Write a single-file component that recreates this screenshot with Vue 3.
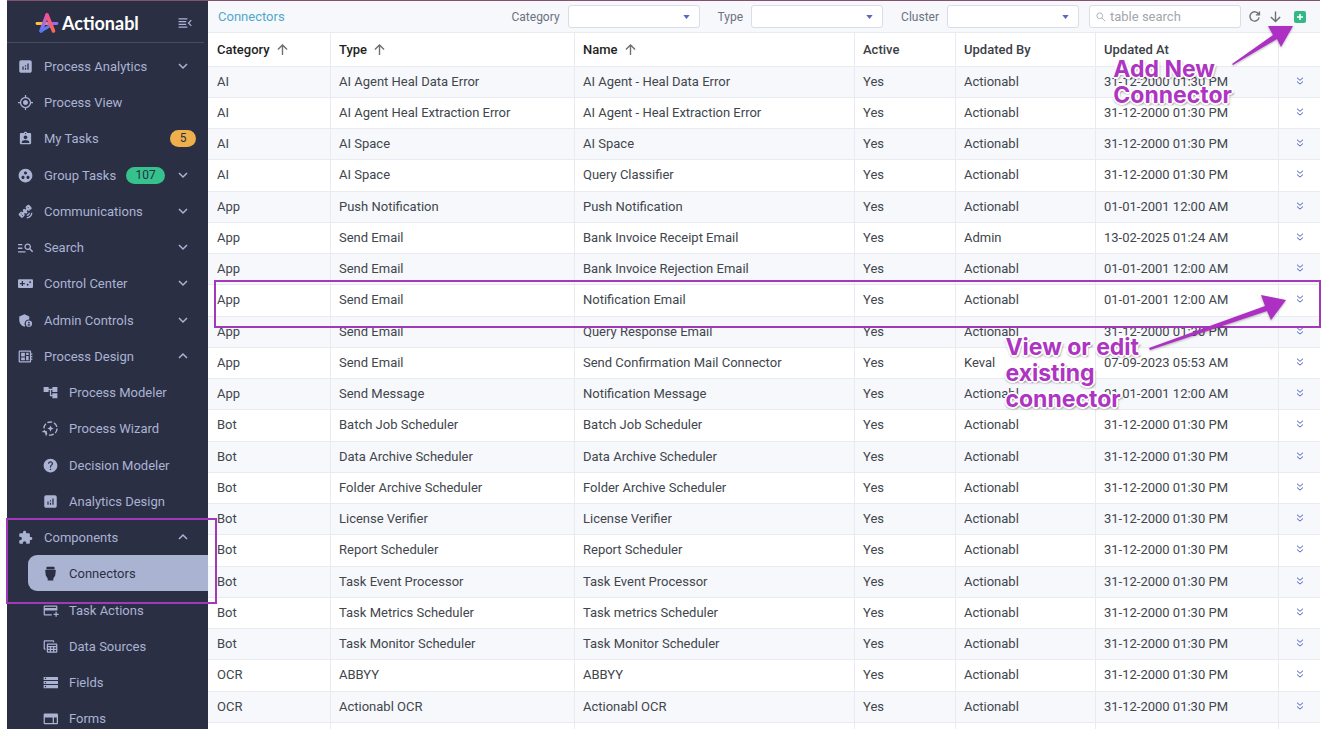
<script setup>
import { ref } from 'vue'

const icons = {
  analytics: 'M19 2H5c-1.700 0-3 1.300-3 3v14c0 1.700 1.300 3 3 3h14c1.700 0 3-1.300 3-3V5c0-1.700-1.300-3-3-3zM9 17H7v-5h2v5zm4 0h-2v-3h2v3zm0-5h-2v-2h2v2zm4 5h-2V7h2v10z',
  target: 'M12 8c-2.21 0-4 1.79-4 4s1.79 4 4 4 4-1.79 4-4-1.79-4-4-4zm8.94 3c-.46-4.17-3.77-7.48-7.94-7.94V0h-2v3.06C6.83 3.52 3.52 6.83 3.06 11H0v2h3.06c.46 4.17 3.77 7.48 7.94 7.94V24h2v-3.06c4.17-.46 7.48-3.77 7.94-7.94H24v-2h-3.06zM12 19c-3.87 0-7-3.13-7-7s3.13-7 7-7 7 3.13 7 7-3.13 7-7 7z',
  person: 'M19 3h-4.18C14.4 1.84 13.3 1 12 1c-1.3 0-2.4.84-2.82 2H5c-1.1 0-2 .9-2 2v14c0 1.1.9 2 2 2h14c1.1 0 2-.9 2-2V5c0-1.1-.9-2-2-2zm-7 0c.55 0 1 .45 1 1s-.45 1-1 1-1-.45-1-1 .45-1 1-1zm0 4c1.66 0 3 1.34 3 3s-1.34 3-3 3-3-1.34-3-3 1.34-3 3-3zm6 12H6v-1.4c0-2 4-3.1 6-3.1s6 1.1 6 3.1V19z',
  group: 'M12 1C5.900 1 1 5.900 1 12s4.900 11 11 11 11-4.900 11-11S18.100 1 12 1zM8 17.500c-1.380 0-2.500-1.120-2.500-2.500s1.120-2.500 2.500-2.500 2.500 1.120 2.500 2.500-1.120 2.500-2.500 2.500zM9.500 8c0-1.380 1.120-2.500 2.500-2.500s2.500 1.120 2.500 2.500-1.120 2.500-2.500 2.500S9.500 9.380 9.500 8zm6.500 9.500c-1.380 0-2.500-1.120-2.500-2.500s1.120-2.500 2.500-2.500 2.500 1.120 2.500 2.500-1.120 2.500-2.500 2.500z',
  satellite: 'M15.200 1.700a2 2 0 0 1 2.800 0l3.300 3.300a2 2 0 0 1 0 2.800l-2.500 2.500a2 2 0 0 1-2.800 0l-.6-.6-1.500 1.500.6.600a2 2 0 0 1 0 2.800l-.2.200a2 2 0 0 1-2.800 0l-.6-.6-1.300 1.300.6.600a2 2 0 0 1 0 2.800l-2.500 2.500a2 2 0 0 1-2.800 0L1.600 18a2 2 0 0 1 0-2.800l2.500-2.500a2 2 0 0 1 2.800 0l.6.600L8.800 12l-.6-.6a2 2 0 0 1 0-2.800l.2-.2a2 2 0 0 1 2.800 0l.6.600 1.500-1.500-.6-.6a2 2 0 0 1 0-2.800zM15.200 5.600l1 1 1-1-1-1zM17 9l1 1 .8-.8-1-1zM4 15.800l1 1 1-1-1-1zM6 18l1 1 1-1-1-1zM23 14h-2c0 3.900-3.100 7-7 7v2c5 0 9-4 9-9zM19 14h-2c0 1.700-1.300 3-3 3v2c2.800 0 5-2.200 5-5z',
  search: 'M7 8.500H0v-2h7v2zm0 3.500H0v2.200h7V12zm15.600 7.500-4.340-4.330c-.8.520-1.740.830-2.760.830-3 0-5.300-2.300-5.300-5.300s2.300-5.300 5.300-5.300 5.300 2.300 5.300 5.300c0 1.020-.310 1.960-.830 2.750L24.300 18zM18.700 10.700c0-1.800-1.400-3.200-3.200-3.200s-3.200 1.400-3.200 3.200 1.400 3.200 3.200 3.200 3.200-1.400 3.200-3.200zM0 20h12v-2.200H0V20z',
  gamepad: 'M22 5H2C.9 5 0 5.900 0 7v10c0 1.100.9 2 2 2h20c1.100 0 2-.9 2-2V7c0-1.100-.9-2-2-2zm-11 8H8v3H6v-3H3v-2h3V8h2v3h3v2zm4.500 2.500c-.83 0-1.500-.67-1.500-1.500s.67-1.500 1.500-1.500 1.500.67 1.500 1.500-.67 1.500-1.500 1.500zm4-4c-.83 0-1.500-.67-1.500-1.500s.67-1.500 1.500-1.500 1.500.67 1.500 1.500-.67 1.500-1.500 1.500z',
  shield: 'M18 10.500V5.500L10.500 2 2 5.500v5.700c0 4.800 3.400 9.300 8 10.500.6-.1 1.100-.3 1.700-.6a6.800 6.800 0 0 1 6.300-10.600zM17.500 12a5 5 0 1 0 0 10 5 5 0 0 0 0-10zm0 2.100a1.400 1.400 0 1 1 0 2.800 1.400 1.400 0 0 1 0-2.800zm0 6.400c-1.100 0-2-.5-2.600-1.300.1-.9 1.700-1.300 2.600-1.300s2.500.4 2.600 1.300c-.6.8-1.500 1.300-2.600 1.300z',
  board: 'M23 9V7h-2V4.500c0-1.100-.9-2-2-2H3c-1.100 0-2 .9-2 2v15c0 1.100.9 2 2 2h16c1.100 0 2-.9 2-2V17h2v-2h-2v-2h2v-2h-2V9zm-4 10.500H3v-15h16zM5 13.500h6V18H5zm8-7.500h4v3.500h-4zM5 6h6v6H5zm8 5h4v7h-4z',
  tree: 'M23 11V3h-8v3H9V3H1v8h8V8h2v10h4v3h8v-8h-8v3h-2V8h2v3z',
  help: 'M12 1C5.900 1 1 5.900 1 12s4.900 11 11 11 11-4.900 11-11S18.100 1 12 1zM13 19h-2v-2h2v2zm2.070-7.750l-.9.920C13.450 12.900 13 13.500 13 15h-2v-.5c0-1.100.45-2.100 1.170-2.830l1.240-1.260c.37-.36.59-.86.59-1.410 0-1.100-.9-2-2-2s-2 .9-2 2H8c0-2.210 1.790-4 4-4s4 1.790 4 4c0 .88-.36 1.680-.93 2.250z',
  wizard: 'M12 7l1.500 3.500L17 12l-3.500 1.500L12 17l-1.500-3.500L7 12l3.500-1.500z',
  puzzle: 'M20.500 11H19V7c0-1.100-.9-2-2-2h-4V3.500C13 2.120 11.880 1 10.500 1S8 2.120 8 3.500V5H4c-1.100 0-1.990.9-1.990 2v3.800H3.500c1.490 0 2.700 1.210 2.700 2.700s-1.210 2.700-2.700 2.700H2V20c0 1.100.9 2 2 2h3.800v-1.500c0-1.490 1.210-2.700 2.700-2.700 1.490 0 2.700 1.210 2.700 2.700V22H17c1.100 0 2-.9 2-2v-4h1.500c1.380 0 2.500-1.120 2.500-2.500S21.880 11 20.500 11z',
  plug: 'M7 1h10c.8 0 1.500.6 1.500 1.500V5h-13V2.500C5.500 1.600 6.200 1 7 1zM4.500 6h15c.6 0 1 .4 1 1l-1 8-3 5v3h-9v-3l-3-5-1-8c0-.6.4-1 1-1z',
  card: 'M21 4H3c-1.110 0-1.990.89-1.990 2L1 18c0 1.110.89 2 2 2h11v-2H3v-6h20V6c0-1.110-.89-2-2-2zm0 4H3V6h18v2zm4 9v2h-3v3h-2v-3h-3v-2h3v-3h2v3h3z',
  tables: 'M4 2h12c1.100 0 2 .9 2 2v1h-2V4H3v11h1v2H3c-1.100 0-2-.9-2-2V4c0-1.100.9-2 2-2zM8 7h13c1.100 0 2 .9 2 2v11c0 1.100-.9 2-2 2H8c-1.100 0-2-.9-2-2V9c0-1.100.9-2 2-2zm0 2v2h13V9zm0 4v2.500h3V13zm5 0v2.500h3V13zm5 0v2.500h3V13zM8 17.500V20h3v-2.500zm5 0V20h3v-2.500zm5 0V20h3v-2.500z',
  storage: 'M1 21h23v-5H1v5zm2-3.500h2v2H3v-2zM1 3v5h23V3H1zm4 3.500H3v-2h2v2zM1 14.500h23v-5H1v5zM3 11h2v2H3v-2z',
  web: 'M22 4H3c-1.100 0-2 .9-2 2v13c0 1.100.9 2 2 2h19c1.100 0 2-.9 2-2V6c0-1.100-.9-2-2-2zM15.500 19H3v-8.500h12.500V19zm6.500 0h-4.500v-8.500H22V19z',
}

const nav = ref([
  { label: 'Process Analytics', icon: 'analytics', arrow: 'down' },
  { label: 'Process View', icon: 'target' },
  { label: 'My Tasks', icon: 'person', badge: '5', tone: 'amber' },
  { label: 'Group Tasks', icon: 'group', badge: '107', tone: 'green', arrow: 'down' },
  { label: 'Communications', icon: 'satellite', arrow: 'down' },
  { label: 'Search', icon: 'search', arrow: 'down' },
  { label: 'Control Center', icon: 'gamepad', arrow: 'down' },
  { label: 'Admin Controls', icon: 'shield', arrow: 'down' },
  { label: 'Process Design', icon: 'board', arrow: 'up' },
  { label: 'Process Modeler', icon: 'tree', sub: true },
  { label: 'Process Wizard', icon: 'wizard', sub: true },
  { label: 'Decision Modeler', icon: 'help', sub: true },
  { label: 'Analytics Design', icon: 'analytics', sub: true },
  { label: 'Components', icon: 'puzzle', arrow: 'up' },
  { label: 'Connectors', icon: 'plug', sub: true, active: true },
  { label: 'Task Actions', icon: 'card', sub: true },
  { label: 'Data Sources', icon: 'tables', sub: true },
  { label: 'Fields', icon: 'storage', sub: true },
  { label: 'Forms', icon: 'web', sub: true },
])

const filters = ['Category', 'Type', 'Cluster']

const columns = [
  { label: 'Category', key: 'category', sort: true },
  { label: 'Type', key: 'type', sort: true },
  { label: 'Name', key: 'name', sort: true },
  { label: 'Active', key: 'active' },
  { label: 'Updated By', key: 'by' },
  { label: 'Updated At', key: 'at' },
]

const Y2000 = '31-12-2000 01:30 PM'
const Y2001 = '01-01-2001 12:00 AM'
const rows = [
  ['AI', 'AI Agent Heal Data Error', 'AI Agent - Heal Data Error', 'Actionabl', Y2000],
  ['AI', 'AI Agent Heal Extraction Error', 'AI Agent - Heal Extraction Error', 'Actionabl', Y2000],
  ['AI', 'AI Space', 'AI Space', 'Actionabl', Y2000],
  ['AI', 'AI Space', 'Query Classifier', 'Actionabl', Y2000],
  ['App', 'Push Notification', 'Push Notification', 'Actionabl', Y2001],
  ['App', 'Send Email', 'Bank Invoice Receipt Email', 'Admin', '13-02-2025 01:24 AM'],
  ['App', 'Send Email', 'Bank Invoice Rejection Email', 'Actionabl', Y2001],
  ['App', 'Send Email', 'Notification Email', 'Actionabl', Y2001],
  ['App', 'Send Email', 'Query Response Email', 'Actionabl', Y2000],
  ['App', 'Send Email', 'Send Confirmation Mail Connector', 'Keval', '07-09-2023 05:53 AM'],
  ['App', 'Send Message', 'Notification Message', 'Actionabl', Y2001],
  ['Bot', 'Batch Job Scheduler', 'Batch Job Scheduler', 'Actionabl', Y2000],
  ['Bot', 'Data Archive Scheduler', 'Data Archive Scheduler', 'Actionabl', Y2000],
  ['Bot', 'Folder Archive Scheduler', 'Folder Archive Scheduler', 'Actionabl', Y2000],
  ['Bot', 'License Verifier', 'License Verifier', 'Actionabl', Y2000],
  ['Bot', 'Report Scheduler', 'Report Scheduler', 'Actionabl', Y2000],
  ['Bot', 'Task Event Processor', 'Task Event Processor', 'Actionabl', Y2000],
  ['Bot', 'Task Metrics Scheduler', 'Task metrics Scheduler', 'Actionabl', Y2000],
  ['Bot', 'Task Monitor Scheduler', 'Task Monitor Scheduler', 'Actionabl', Y2000],
  ['OCR', 'ABBYY', 'ABBYY', 'Actionabl', Y2000],
  ['OCR', 'Actionabl OCR', 'Actionabl OCR', 'Actionabl', Y2000],
].map(([category, type, name, by, at]) => ({ category, type, name, active: 'Yes', by, at }))
</script>

<template>
  <div class="app">
    <aside class="sidebar">
      <header class="brand">
        <svg class="logo" viewBox="0 0 24 22" aria-hidden="true">
          <defs>
            <linearGradient id="lg-a" gradientUnits="userSpaceOnUse" x1="5" y1="20" x2="12" y2="3">
              <stop offset="0" stop-color="#3f7df0" /><stop offset=".5" stop-color="#a86be0" /><stop offset="1" stop-color="#f0509a" />
            </linearGradient>
            <linearGradient id="lg-b" gradientUnits="userSpaceOnUse" x1="12" y1="3" x2="18" y2="20">
              <stop offset="0" stop-color="#f0509a" /><stop offset="1" stop-color="#ff6a4a" />
            </linearGradient>
            <linearGradient id="lg-c" gradientUnits="userSpaceOnUse" x1="2" y1="0" x2="22" y2="0">
              <stop offset="0" stop-color="#ffc83a" /><stop offset=".4" stop-color="#ffa04a" /><stop offset=".6" stop-color="#c060e0" /><stop offset="1" stop-color="#8c6cf0" />
            </linearGradient>
          </defs>
          <g fill="none" stroke-width="3.600" stroke-linecap="round" stroke-linejoin="round">
            <path d="M2 11.500H22" stroke="url(#lg-c)" stroke-width="2.800" />
            <path d="M6 19L17 12.500" stroke="#5b7df2" stroke-width="3" />
            <path d="M6 19L12 3" stroke="url(#lg-a)" />
            <path d="M12 3L18.500 19" stroke="url(#lg-b)" />
          </g>
        </svg>
        <span class="brand-name">Actionabl</span>
        <button class="icon-btn collapse" type="button" aria-label="Collapse menu">
          <svg viewBox="0 0 24 24"><path d="M1 20h15v-2H1zM1 4v2h15V4zm0 6.700h13v-2H1zm0 4.700h13v-2H1zM23.500 16.100L19.500 12l4-4.100L22 6.400 16.500 12l5.500 5.600z" /></svg>
        </button>
      </header>
      <nav>
        <ul class="nav-list">
          <li v-for="item in nav" :key="item.label" :class="['nav-item', { sub: item.sub }]">
            <a href="#" :class="['nav-link', { active: item.active }]">
              <svg class="nav-icon" viewBox="0 0 24 24" aria-hidden="true">
                <path :d="icons[item.icon]" fill-rule="evenodd" />
                <g v-if="item.icon === 'wizard'" fill="none" stroke="currentColor" stroke-width="2.200">
                  <circle cx="12" cy="12" r="10.500" stroke-dasharray="8 3" />
                  <path d="M-1 17h6v6" />
                </g>
              </svg>
              <span>{{ item.label }}</span>
              <span v-if="item.badge" :class="['badge', item.tone]">{{ item.badge }}</span>
              <svg v-if="item.arrow" class="arrow" viewBox="0 0 10 10" aria-hidden="true">
                <path :d="item.arrow === 'down' ? 'M1 3l4 4 4-4' : 'M1 7l4-4 4 4'" />
              </svg>
            </a>
          </li>
        </ul>
      </nav>
      <div class="frame frame-nav"></div>
    </aside>

    <main class="main">
      <div class="toolbar">
        <h1 class="title">Connectors</h1>
        <div class="filters">
          <label v-for="f in filters" :key="f" class="filter">
            <span>{{ f }}</span>
            <span class="select-wrap">
              <select><option></option></select>
              <svg viewBox="0 0 8 5" aria-hidden="true"><path d="M0 0h8L4 5z" /></svg>
            </span>
          </label>
        </div>
        <label class="search">
          <svg viewBox="0 0 12 12" aria-hidden="true"><circle cx="4.500" cy="4.500" r="3.500" /><path d="M7.200 7.200L11 11" /></svg>
          <input type="text" placeholder="table search" aria-label="Table search" />
        </label>
        <div class="actions">
          <button class="icon-btn line" type="button" aria-label="Refresh">
            <svg viewBox="0 0 14 14"><path d="M11.500 4.500A5 5 0 1 0 12 8M12.300 1.500v3.800H8.500" /></svg>
          </button>
          <button class="icon-btn line" type="button" aria-label="Download">
            <svg viewBox="0 0 14 14"><path d="M7 1.500v11M2 7.500l5 5 5-5" /></svg>
          </button>
          <button class="icon-btn add" type="button" aria-label="Add new connector">
            <svg viewBox="0 0 12 12"><path d="M6 3v6M3 6h6" /></svg>
          </button>
        </div>
      </div>

      <table class="grid">
        <colgroup>
          <col class="c-category" /><col class="c-type" /><col /><col class="c-active" />
          <col class="c-by" /><col class="c-at" /><col class="c-more" />
        </colgroup>
        <thead>
          <tr>
            <th v-for="c in columns" :key="c.key" scope="col" :class="{ sorted: c.sort }">
              {{ c.label }}
              <svg v-if="c.sort" class="sort" viewBox="0 0 12 12" aria-hidden="true"><path d="M6 12V1M1 6l5-5 5 5" /></svg>
            </th>
            <th></th>
          </tr>
        </thead>
        <tbody>
          <tr v-for="(r, i) in rows" :key="i">
            <td v-for="c in columns" :key="c.key">{{ r[c.key] }}</td>
            <td class="more">
              <button class="icon-btn" type="button" :aria-label="'Options for ' + r.name">
                <svg viewBox="0 0 8 8"><path d="M1 .7l3 2.600L7 .7M1 4.500l3 2.600 3-2.600" /></svg>
              </button>
            </td>
          </tr>
          <tr class="blank"><td v-for="n in 7" :key="n"></td></tr>
        </tbody>
      </table>

      <div class="frame frame-row"></div>
      <p class="note note-add">Add New<br />Connector</p>
      <svg class="pointer pointer-add" viewBox="0 0 64 42" aria-hidden="true">
        <path d="M1 40L42 11 37 2 62 2 50 23 46 15 2 41z" />
      </svg>
      <p class="note note-edit">View or edit<br />existing<br />connector</p>
      <svg class="pointer pointer-edit" viewBox="0 0 140 58" aria-hidden="true">
        <path d="M1 55L117 13 113 2 138 7 123 27 119 18 2 57z" />
      </svg>
    </main>
  </div>
</template>

<style>
body {
  margin: 0;
  background: #fff;
}
</style>

<style scoped>
.app {
  display: flex;
  box-sizing: border-box;
  height: 100vh;
  margin: 0 7px;
  border-top: 1px solid #86506f;
  overflow-x: visible;
  overflow-y: clip;
  font-family: Roboto, "Liberation Sans", sans-serif;
  font-size: 13px;
  color: #41464d;
}
ul, p, h1 {
  margin: 0;
  padding: 0;
}
button, select, input {
  font: inherit;
}
.icon-btn {
  display: inline-flex;
  padding: 0;
  border: 0;
  background: none;
  cursor: pointer;
}

/* Sidebar */
.sidebar {
  position: relative;
  flex: 0 0 201px;
  background: #2a2f44;
  color: #abb3d3;
}
.brand {
  display: flex;
  align-items: center;
  box-sizing: border-box;
  height: 42px;
  margin-right: 4px;
  padding: 2px 12px 0 28px;
  border-bottom: 1px solid #444b62;
}
.logo {
  width: 24px;
  height: 22px;
}
.brand-name {
  margin-left: 3px;
  font-family: Lato, sans-serif;
  font-size: 18px;
  font-weight: 700;
  color: #fff;
}
.collapse {
  margin-left: auto;
}
.collapse svg {
  width: 14px;
  height: 14px;
  fill: #abb3d3;
}
.nav-list {
  padding-top: 5px;
  list-style: none;
}
.nav-item {
  height: 36px;
}
.nav-item:nth-child(4n + 3) {
  height: 37px;
}
.nav-link {
  display: flex;
  align-items: center;
  box-sizing: border-box;
  height: 36px;
  padding: 0 12px 0 11px;
  color: inherit;
  text-decoration: none;
}
.sub .nav-link {
  margin-left: 21px;
  padding-left: 15px;
  border-radius: 9px 0 0 9px;
}
.nav-link.active {
  background: #abb3d3;
  color: #2a2f44;
}
.nav-icon {
  width: 15px;
  height: 15px;
  margin-right: 11px;
  fill: currentColor;
  overflow: visible;
}
.arrow {
  width: 10px;
  height: 10px;
  margin: 0 8px 0 auto;
  fill: none;
  stroke: currentColor;
  stroke-width: 1.500;
}
.badge {
  box-sizing: border-box;
  height: 17px;
  border-radius: 9px;
  font-size: 12px;
  line-height: 17px;
  text-align: center;
  color: #2a2f44;
}
.amber {
  width: 26px;
  margin-left: auto;
  background: #efb04c;
}
.green {
  width: 39px;
  margin-left: 10px;
  background: #35c28c;
}

/* Toolbar */
.main {
  position: relative;
  flex: 1;
  min-width: 0;
}
.toolbar {
  display: flex;
  align-items: center;
  box-sizing: border-box;
  height: 32px;
  padding: 0 13px 0 10px;
  border-bottom: 1px solid #e9ebf1;
  background: #f7f8fb;
}
.title {
  margin-right: auto;
  font-size: 13px;
  font-weight: 400;
  color: #4fa9cb;
}
.filters {
  display: flex;
  gap: 18px;
  font-size: 12px;
}
.filter {
  display: flex;
  align-items: center;
  gap: 8px;
  color: #6b7280;
}
.select-wrap {
  position: relative;
  display: flex;
}
select {
  appearance: none;
  box-sizing: border-box;
  width: 132px;
  height: 23px;
  border: 1px solid #dadde6;
  border-radius: 3px;
  background: #fff;
}
.select-wrap svg {
  position: absolute;
  top: 10px;
  right: 10px;
  width: 7px;
  height: 4px;
  fill: #5867c3;
  pointer-events: none;
}
.search {
  display: flex;
  align-items: center;
  gap: 4px;
  box-sizing: border-box;
  width: 152px;
  height: 23px;
  margin-left: 10px;
  padding: 0 6px;
  border: 1px solid #dadde6;
  border-radius: 3px;
  background: #fff;
}
.search svg {
  flex: none;
  width: 10px;
  height: 10px;
  fill: none;
  stroke: #a3a6ac;
}
.search input {
  min-width: 0;
  padding: 0;
  border: 0;
  outline: 0;
  background: none;
}
.search input::placeholder {
  color: #a3a6ac;
  opacity: 1;
}
.actions {
  display: flex;
  align-items: center;
  gap: 8px;
  margin-left: 7px;
}
.line svg {
  width: 13px;
  height: 13px;
  fill: none;
  stroke: #6c6f74;
  stroke-width: 1.500;
}
.add {
  margin-left: 4px;
  margin-right: 1px;
  border-radius: 2px;
  background: #35b888;
}
.add svg {
  width: 12px;
  height: 12px;
  fill: none;
  stroke: #fff;
  stroke-width: 1.500;
}

/* Table */
.grid {
  width: 100%;
  table-layout: fixed;
  border-collapse: separate;
  border-spacing: 0;
}
.c-category { width: 123px; }
.c-type { width: 244px; }
.c-active { width: 101px; }
.c-by { width: 140px; }
.c-at { width: 183px; }
.c-more { width: 41px; }
th, td {
  box-sizing: border-box;
  padding: 0 8px;
  border-right: 1px solid #e9ebf1;
  border-bottom: 1px solid #e9ebf1;
  text-align: left;
  white-space: nowrap;
}
th:first-child, td:first-child {
  padding-left: 9px;
}
th:last-child, td:last-child {
  border-right: 0;
}
th {
  height: 34px;
  font-weight: 500;
  color: #3b3f46;
}
th.sorted {
  color: #1d1f23;
}
td {
  height: 31px;
  padding-bottom: 2px;
}
tr:nth-child(4n) td {
  height: 32px;
}
tbody tr:nth-child(odd) {
  background: #f7f8fb;
}
tbody tr.blank {
  background: #fff;
}
.sort {
  width: 11px;
  height: 11px;
  margin-left: 4px;
  fill: none;
  stroke: #6c6f74;
  stroke-width: 1.500;
  vertical-align: -1px;
}
td.more {
  padding: 0 0 4px;
  text-align: center;
}
.more svg {
  width: 8px;
  height: 8px;
  fill: none;
  stroke: #4f5fc4;
}

/* Annotations drawn over the page */
.frame {
  position: absolute;
  z-index: 2;
  box-sizing: border-box;
  border: 2px solid #a239b8;
  pointer-events: none;
}
.frame-nav {
  top: 517px;
  left: -1px;
  width: 211px;
  height: 86px;
}
.frame-row {
  top: 279px;
  left: 6px;
  right: -1px;
  height: 48px;
}
.note {
  position: absolute;
  z-index: 2;
  font-family: Inter, sans-serif;
  font-size: 23px;
  font-weight: 700;
  line-height: 26px;
  white-space: nowrap;
  color: #ad35c2;
  text-shadow:
    2px 0 0 #fff, -2px 0 0 #fff, 0 2px 0 #fff, 0 -2px 0 #fff,
    1px 1px 0 #fff, -1px 1px 0 #fff, 1px -1px 0 #fff, -1px -1px 0 #fff,
    2px 2px 2px rgba(0, 0, 0, 0.400), -1px 2px 2px rgba(0, 0, 0, 0.300);
}
.note-add {
  top: 55px;
  right: 88px;
}
.note-edit {
  top: 333px;
  right: 181px;
}
.pointer {
  position: absolute;
  z-index: 2;
  fill: #ad2fc4;
  filter: drop-shadow(0 1px 1px rgba(0, 0, 0, 0.300));
  pointer-events: none;
}
.pointer-add {
  top: 23px;
  right: 25px;
  width: 64px;
  height: 42px;
}
.pointer-edit {
  top: 292px;
  right: 32px;
  width: 140px;
  height: 58px;
}
</style>
